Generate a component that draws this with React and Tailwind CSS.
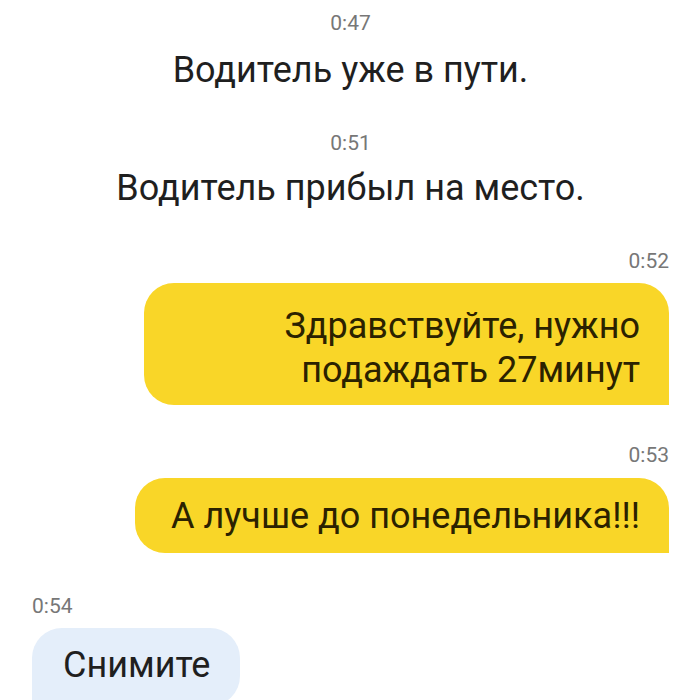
export default function App() {
  return (
    <div className="w-[700px] h-[700px] overflow-hidden bg-white flex flex-col pl-[32px] pr-[31px]" style={{ fontFamily: 'Roboto, "Liberation Sans", sans-serif' }}>
      <div className="mt-[11px] text-center text-[21px] leading-[24px] text-[#777]">0:47</div>
      <div className="mt-[14px] text-center text-[36px] leading-[42px] text-[#1f1f1f]">Водитель уже в пути.</div>
      <div className="mt-[40px] text-center text-[21px] leading-[24px] text-[#777]">0:51</div>
      <div className="mt-[12px] text-center text-[36px] leading-[42px] text-[#1f1f1f]">Водитель прибыл на место.</div>
      <div className="mt-[40px] text-right text-[21px] leading-[24px] text-[#777]">0:52</div>
      <div className="mt-[10px] self-end w-[525px] rounded-[30px] rounded-br-none bg-[#f9d628] pr-[29px] pt-[21px] pb-[13px] text-right text-[36px] leading-[44px] text-[#2b2200]">
        Здравствуйте, нужно<br />подаждать 27минут
      </div>
      <div className="mt-[38px] text-right text-[21px] leading-[24px] text-[#777]">0:53</div>
      <div className="mt-[11px] self-end w-[534px] rounded-[30px] rounded-br-none bg-[#f9d628] pr-[29px] pt-[17px] pb-[16px] text-right text-[36px] leading-[42px] text-[#2b2200]">
        А лучше до понедельника!!!
      </div>
      <div className="mt-[41px] text-left text-[21px] leading-[24px] text-[#777]">0:54</div>
      <div className="mt-[10px] self-start w-[208px] rounded-[30px] rounded-bl-none bg-[#e4eefa] pl-[31px] pt-[16px] pb-[20px] text-[36px] leading-[42px] text-[#1f1f1f]">
        Снимите
      </div>
    </div>
  );
}
